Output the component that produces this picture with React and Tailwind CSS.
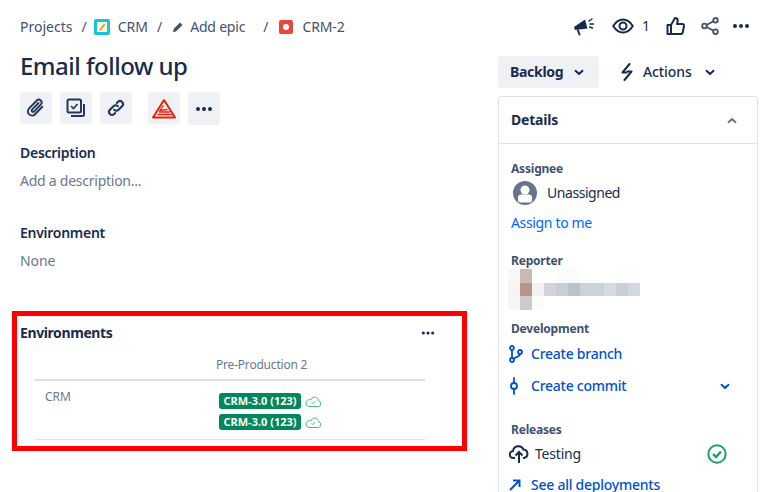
import React from "react";

const font = { fontFamily: '"Noto Sans","Open Sans",sans-serif' };

function Dots({ className = "" }) {
  return (
    <svg width="18" height="6" viewBox="0 0 18 6" className={className}>
      <circle cx="3" cy="3" r="2" fill="#172b4d" />
      <circle cx="9" cy="3" r="2" fill="#172b4d" />
      <circle cx="15" cy="3" r="2" fill="#172b4d" />
    </svg>
  );
}

function Chevron({ color = "#172b4d", up = false }) {
  return (
    <svg width="10" height="7" viewBox="0 0 10 7">
      <path d={up ? "M1.5 5.2 5 2l3.5 3.2" : "M1.5 1.8 5 5l3.5-3.2"} fill="none" stroke={color} strokeWidth="2" strokeLinecap="round" strokeLinejoin="round" />
    </svg>
  );
}

function IconBtn({ children, h = "h-8" }) {
  return <div className={`w-8 ${h} rounded-[3px] bg-[#f0f1f4] flex items-center justify-center`}>{children}</div>;
}

function Cloud() {
  return (
    <svg width="17" height="13" viewBox="0 0 17 13">
      <path d="M4 11.5h9.2a2.8 2.8 0 0 0 .6-5.5A4.2 4.2 0 0 0 8.6 2.2 4 4 0 0 0 5.8 5 3.3 3.3 0 0 0 1 7.9a3.5 3.5 0 0 0 3 3.6Z" fill="none" stroke="#36b37e" strokeWidth="0.9" />
      <path d="m6.7 7.4 1.2 1.2 2.2-2.2" fill="none" stroke="#36b37e" strokeWidth="0.9" />
    </svg>
  );
}

function Badge() {
  return (
    <div className="flex items-center gap-1">
      <span className="w-[82px] h-4 rounded-[3px] bg-[#00875a] text-white text-[11px] font-bold leading-4 text-center whitespace-nowrap">CRM-3.0 (123)</span>
      <Cloud />
    </div>
  );
}

const blur = [
  ["#f7f7f7", "#c9b9b5", "#fff", "#fff", "#fbfbfb", "#fbfbfb", "#fff", "#fff", "#fff", "#fdfdfd", "#fdfdfd"],
  ["#f5f5f5", "#b89489", "#f2f2f2", "#d0d4da", "#c9ced4", "#bcc2c9", "#cdd2d9", "#cdd2d9", "#d5d9e0", "#c9ced6", "#d3d8de"],
  ["#f6f6f6", "#cdcbcb", "#fbfbfb", "#fff", "#fff", "#fff", "#fff", "#fff", "#fff", "#fff", "#fff"],
];

export default function App() {
  return (
    <div style={font} className="w-[763px] h-[492px] overflow-hidden bg-white flex text-[#172b4d]">
      <div className="w-[498px] shrink-0 flex flex-col">
        <div className="h-[14px] mt-[20px] ml-5 flex items-center text-sm text-[#42526e] whitespace-nowrap">
          <span>Projects</span>
          <span className="ml-[9px]">/</span>
          <span className="ml-[7px] w-4 h-4 rounded-[2px] bg-[#17c3e4] flex items-center justify-center">
            <svg width="12" height="12" viewBox="0 0 12 12">
              <rect x="1" y="1" width="10" height="10" fill="#fdf7dc" />
              <path d="M3 9 8 2.5l1.500 1.200L4.500 10Z" fill="#f59a3c" />
            </svg>
          </span>
          <span className="ml-2">CRM</span>
          <span className="ml-[9px]">/</span>
          <svg width="12" height="12" viewBox="0 0 12 12" className="ml-[10px]">
            <path d="M1 11l.6-3L8 1.500 10.500 4 4 10.400Z" fill="#42526e" />
          </svg>
          <span className="ml-[6px] tracking-[-0.2px]">Add epic</span>
          <span className="ml-[18px]">/</span>
          <span className="ml-[11px] w-[14px] h-[14px] rounded-[2px] bg-[#e5493a] flex items-center justify-center">
            <span className="w-[6px] h-[6px] rounded-full bg-white" />
          </span>
          <span className="ml-[9px] tracking-[-0.1px]">CRM-2</span>
        </div>

        <h1 className="mt-[16px] ml-5 h-[32px] text-2xl leading-8 font-medium tracking-[-0.5px]">Email follow up</h1>

        <div className="mt-[10px] ml-5 flex items-start">
          <IconBtn>
            <svg width="20" height="20" viewBox="0 0 24 24" fill="none" stroke="#253858" strokeWidth="2.3" strokeLinecap="round">
              <path d="m19.500 10.500-8.600 9a5 5 0 0 1-7.200-7L13 3a3.400 3.400 0 0 1 4.900 4.700L9.600 16.300a1.700 1.700 0 0 1-2.400-2.400L15 6" />
            </svg>
          </IconBtn>
          <div className="ml-2"><IconBtn>
            <svg width="20" height="20" viewBox="0 0 20 20" fill="none" stroke="#253858" strokeWidth="2">
              <rect x="1.500" y="1.500" width="13.500" height="13" rx="1.500" />
              <path d="m5 8 2.500 2.500L11.500 6" strokeWidth="1.700" />
              <path d="M18 6v10.500a1.500 1.500 0 0 1-1.500 1.500H5" />
            </svg>
          </IconBtn></div>
          <div className="ml-2"><IconBtn>
            <svg width="20" height="20" viewBox="0 0 20 20" fill="none" stroke="#253858" strokeWidth="2.100" strokeLinecap="round">
              <path d="M8.200 11.800a3 3 0 0 0 4.300 0l3.600-3.600a3 3 0 0 0-4.300-4.300l-1 1" />
              <path d="M11.800 8.200a3 3 0 0 0-4.300 0l-3.600 3.600a3 3 0 0 0 4.300 4.300l1-1" />
            </svg>
          </IconBtn></div>
          <div className="ml-4"><IconBtn>
            <svg width="26" height="21" viewBox="0 0 26 21">
              <path d="M13 2 2 19.500h22Z" fill="none" stroke="#e8210f" strokeWidth="2" strokeLinejoin="round" />
              <path d="M12.500 7.500 9 12.500l7.500-1M8 14h11M6.500 16.500H21" fill="none" stroke="#e8210f" strokeWidth="1.300" />
            </svg>
          </IconBtn></div>
          <div className="ml-2"><IconBtn h="h-[33px]"><Dots /></IconBtn></div>
        </div>

        <div className="mt-[18px] ml-5 h-5 text-sm leading-5 font-semibold tracking-[-0.27px]">Description</div>
        <div className="mt-2 ml-5 h-5 text-sm leading-5 text-[#6b778c] tracking-[-0.25px]">Add a description...</div>
        <div className="mt-[32px] ml-5 h-5 text-sm leading-5 font-semibold tracking-[-0.27px]">Environment</div>
        <div className="mt-2 ml-5 h-5 text-sm leading-5 text-[#6b778c] tracking-[-0.1px]">None</div>

        <div className="mt-[40px] ml-3 w-[455px] h-[140px] border-[5px] border-[#fe0000] flex flex-col">
          <div className="flex items-center justify-between h-4 mt-[9px] ml-[3px] mr-[27px]">
            <span className="text-sm font-bold leading-4 tracking-[-0.4px]">Environments</span>
            <Dots className="w-[14px]" />
          </div>
          <div className="mt-[15px] ml-[18px] mr-[37px] border-b-2 border-[#dfe1e6] h-[25px] pl-[181px] pt-px text-xs leading-4 text-[#6b778c] whitespace-nowrap tracking-[-0.2px]">Pre-Production 2</div>
          <div className="ml-[18px] mr-[37px] h-[59px] border-b border-[#dfe1e6] flex items-start">
            <span className="ml-[10px] mt-[8px] w-[174px] text-xs leading-4 text-[#6b778c]">CRM</span>
            <div className="mt-[12px] flex flex-col gap-[5px]">
              <Badge />
              <Badge />
            </div>
          </div>
        </div>
      </div>

      <div className="w-[265px] shrink-0 flex flex-col">
        <div className="mt-[16px] h-[22px] flex items-center">
          <svg width="22" height="20" viewBox="0 0 22 20" className="ml-[75px]">
            <path d="M1 11 12 3.500l2.500 9L6 13.500 2 14Z" fill="#172b4d" />
            <path d="m5 14.500 1.500 4" stroke="#172b4d" strokeWidth="2" strokeLinecap="round" />
            <path d="m16 5 3-2M17 8h3.500M16.500 11l3 1" stroke="#172b4d" strokeWidth="1.500" strokeLinecap="round" />
          </svg>
          <svg width="22" height="18" viewBox="0 0 22 18" className="ml-[17px]" fill="none" stroke="#172b4d" strokeWidth="2">
            <path d="M1.200 9C4 4.500 7 2.500 11 2.500S18 4.500 20.800 9C18 13.500 15 15.500 11 15.500S4 13.500 1.200 9Z" />
            <circle cx="11" cy="9" r="3.500" />
          </svg>
          <span className="ml-[8px] text-sm w-[14px] text-[#172b4d]">1</span>
          <svg width="20" height="20" viewBox="0 0 20 20" className="ml-[10px]" fill="none" stroke="#172b4d" strokeWidth="2" strokeLinejoin="round">
            <path d="M1.500 9h3.500v9H1.500Z" />
            <path d="M5 9l4-7c1.800 0 2.800 1 2.800 2.600L11 8h5.500c1 0 1.700.8 1.500 1.800l-1.200 6.500c-.2 1-.9 1.700-1.900 1.700H5" />
          </svg>
          <svg width="18" height="18" viewBox="0 0 18 18" className="ml-[15px]" fill="none" stroke="#42526e" strokeWidth="1.800">
            <circle cx="3.500" cy="9" r="2.300" />
            <circle cx="14.500" cy="3.300" r="2.300" />
            <circle cx="14.500" cy="14.700" r="2.300" />
            <path d="m5.500 8 7-3.700M5.500 10l7 3.700" />
          </svg>
          <Dots className="ml-[13px]" />
        </div>

        <div className="mt-[18px] pt-[2px] flex items-center h-[34px]">
          <div className="w-[101px] h-8 rounded-[3px] bg-[#f0f1f4] flex items-center pl-3 text-sm font-bold tracking-[-0.3px]">
            <span>Backlog</span>
            <span className="ml-[11px] flex"><Chevron /></span>
          </div>
          <svg width="16" height="18" viewBox="0 0 16 18" className="ml-[20px]">
            <path d="M10.500 1 3.500 9.500h4M5.500 17l7-8.500h-4" fill="none" stroke="#172b4d" strokeWidth="2" strokeLinejoin="round" strokeLinecap="round" />
          </svg>
          <span className="ml-[8px] text-sm font-medium tracking-[-0.1px]">Actions</span>
          <span className="ml-[13px] flex"><Chevron /></span>
        </div>

        <div className="mt-2 w-[260px] h-[420px] rounded-[3px] border border-[#dfe1e6] flex flex-col shrink-0">
          <div className="h-[47px] border-b border-[#dfe1e6] flex items-center justify-between pl-3 pr-[20px] shrink-0">
            <span className="text-sm font-bold tracking-[-0.2px]">Details</span>
            <Chevron color="#6b778c" up />
          </div>

          <div className="mt-[17px] ml-3 h-4 text-xs leading-4 font-bold text-[#42526e] tracking-[-0.2px]">Assignee</div>
          <div className="mt-[4px] ml-[14px] h-6 flex items-center">
            <svg width="24" height="24" viewBox="0 0 24 24">
              <circle cx="12" cy="12" r="12" fill="#67748f" />
              <circle cx="12" cy="9" r="4.500" fill="#fff" />
              <path d="M5 16.500a3 3 0 0 1 3-3h8a3 3 0 0 1 3 3V20a3 3 0 0 1-2 1.500H7A3 3 0 0 1 5 20Z" fill="#fff" />
            </svg>
            <span className="ml-[10px] text-sm tracking-[-0.45px]">Unassigned</span>
          </div>
          <div className="mt-[8px] ml-3 h-5 text-sm leading-5 text-[#0065ff] tracking-[-0.35px]">Assign to me</div>

          <div className="mt-[20px] ml-3 h-4 text-xs leading-4 font-bold text-[#42526e] tracking-[-0.2px]">Reporter</div>
          <div className="ml-[9px] flex flex-col">
            {blur.map((row, i) => (
              <div key={i} className={`flex ${i === 1 ? "h-[13px]" : "h-[14px]"}`}>
                {row.map((c, j) => (
                  <div key={j} className="w-3 h-full" style={{ background: c }} />
                ))}
              </div>
            ))}
          </div>

          <div className="mt-[11px] ml-3 h-4 text-xs leading-4 font-bold text-[#42526e] tracking-[-0.2px]">Development</div>
          <div className="mt-[7px] ml-[9px] h-5 flex items-center text-sm font-medium text-[#0052cc]">
            <svg width="16" height="18" viewBox="0 0 16 18" fill="none" stroke="#0052cc" strokeWidth="1.800">
              <circle cx="4" cy="3" r="2" />
              <circle cx="4" cy="15" r="2" />
              <circle cx="12" cy="7" r="2" />
              <path d="M4 5v8M12 9c0 2.500-4 3-6.500 4.500" />
            </svg>
            <span className="ml-[7px] tracking-[-0.25px]">Create branch</span>
          </div>
          <div className="mt-[12px] ml-[9px] h-5 flex items-center text-sm font-medium text-[#0052cc] pr-[27px]">
            <svg width="16" height="20" viewBox="0 0 16 20" fill="none" stroke="#0052cc" strokeWidth="1.800">
              <circle cx="6" cy="10" r="3" />
              <path d="M6 2v5M6 13v5" strokeLinecap="round" />
            </svg>
            <span className="ml-[7px] flex-1 tracking-[-0.25px]">Create commit</span>
            <Chevron color="#0052cc" />
          </div>

          <div className="mt-[26px] ml-3 h-4 text-xs leading-4 font-bold text-[#42526e] tracking-[-0.2px]">Releases</div>
          <div className="mt-[4px] ml-[10px] h-6 flex items-center text-sm pr-[30px]">
            <svg width="20" height="18" viewBox="0 0 20 18" fill="none" stroke="#172b4d" strokeWidth="2">
              <path d="M6 13H4.500a3.500 3.500 0 0 1-.5-7A5.500 5.500 0 0 1 14.500 4.500 4.300 4.300 0 0 1 15 13h-1" />
              <path d="M10 18V8M6.500 10.500 10 7l3.500 3.500" />
            </svg>
            <span className="ml-[6px] flex-1 tracking-[-0.2px]">Testing</span>
            <svg width="20" height="20" viewBox="0 0 20 20" fill="none" stroke="#1f9d6b" strokeWidth="2">
              <circle cx="10" cy="10" r="8.700" />
              <path d="m6 10 3 3 5-5.500" strokeWidth="2.400" />
            </svg>
          </div>
          <div className="mt-[9px] ml-[9px] h-5 flex items-center text-sm font-medium text-[#0052cc]">
            <svg width="14" height="14" viewBox="0 0 14 14" fill="none" stroke="#0052cc" strokeWidth="2">
              <path d="M2 12 11 3M5 2.500h6.500V9" />
            </svg>
            <span className="ml-[9px] tracking-[-0.25px]">See all deployments</span>
          </div>
        </div>
      </div>
    </div>
  );
}
